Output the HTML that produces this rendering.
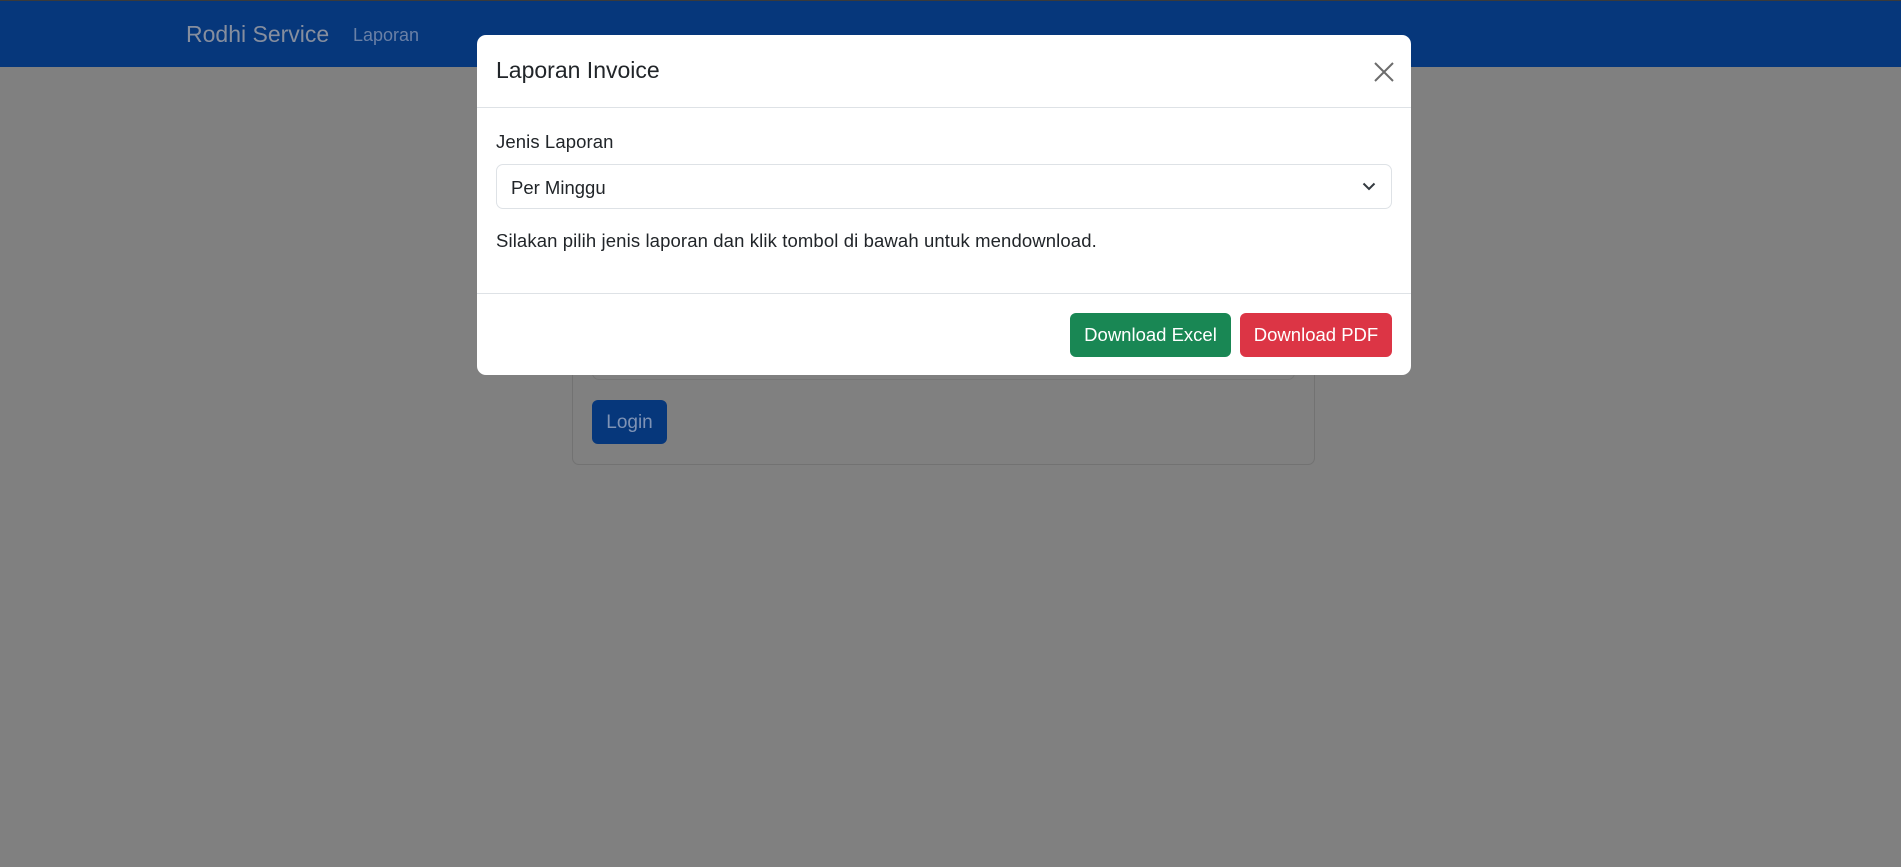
<!DOCTYPE html>
<html><head><style>
html,body{margin:0;padding:0;width:1901px;height:867px;overflow:hidden;background:#808080;font-family:"Liberation Sans",sans-serif;}
.nav{position:absolute;left:0;top:0;width:1901px;height:67px;background:#06377b;border-top:1px solid #3a3a3a;box-sizing:border-box;}
.brand{position:absolute;left:186px;top:20px;font-size:23px;color:#868e9e;}
.link{position:absolute;left:353px;top:24px;font-size:18px;color:#6a80a6;}
.card{position:absolute;left:572px;top:300px;width:743px;height:165px;border:1px solid #727272;border-radius:7px;box-sizing:border-box;}
.inp{position:absolute;left:592px;top:330px;width:703px;height:50px;border:1px solid #767676;border-radius:7px;box-sizing:border-box;}
.login{position:absolute;left:592px;top:400px;width:75px;height:44px;background:#06377b;border-radius:6px;color:#7f93b5;font-size:19px;line-height:46px;text-align:center;}
.modal{position:absolute;left:477px;top:35px;width:934px;height:340px;background:#fff;border-radius:9px;}
.title{position:absolute;left:19px;top:22px;font-size:23px;color:#212529;font-weight:500;}
.hr{position:absolute;left:0;width:934px;height:1px;background:#dee2e6;}
.x{position:absolute;left:897px;top:27px;}
.lbl{position:absolute;left:19px;top:96px;font-size:18.5px;color:#212529;letter-spacing:0.1px;}
.sel{position:absolute;left:19px;top:129px;width:896px;height:45px;border:1px solid #dee2e6;border-radius:7px;box-sizing:border-box;font-size:18.5px;color:#212529;line-height:45px;padding-left:14px;}
.p{position:absolute;left:19px;top:195px;font-size:18.5px;color:#212529;letter-spacing:0.12px;}
.btn{position:absolute;top:278px;height:44px;border-radius:6px;color:#fff;font-size:18.5px;line-height:44px;text-align:center;}
</style></head><body>
<div class="nav"><div class="brand">Rodhi Service</div><div class="link">Laporan</div></div>
<div class="card"></div><div class="inp"></div><div class="login">Login</div>
<div class="modal">
<div class="title">Laporan Invoice</div>
<svg class="x" width="20" height="20" viewBox="0 0 20 20"><path d="M1 1L19 19M19 1L1 19" stroke="#6c6c6c" stroke-width="2"/></svg>
<div class="hr" style="top:72px"></div>
<div class="lbl">Jenis Laporan</div>
<div class="sel">Per Minggu<svg style="position:absolute;right:15px;top:16px" width="14" height="10" viewBox="0 0 14 10"><path d="M1.5 2.5L7 8L12.5 2.5" stroke="#343a40" stroke-width="2" fill="none"/></svg></div>
<div class="p">Silakan pilih jenis laporan dan klik tombol di bawah untuk mendownload.</div>
<div class="hr" style="top:258px"></div>
<div class="btn" style="left:593px;width:161px;background:#198754">Download Excel</div>
<div class="btn" style="left:763px;width:152px;background:#dc3545">Download PDF</div>
</div>
</body></html>
